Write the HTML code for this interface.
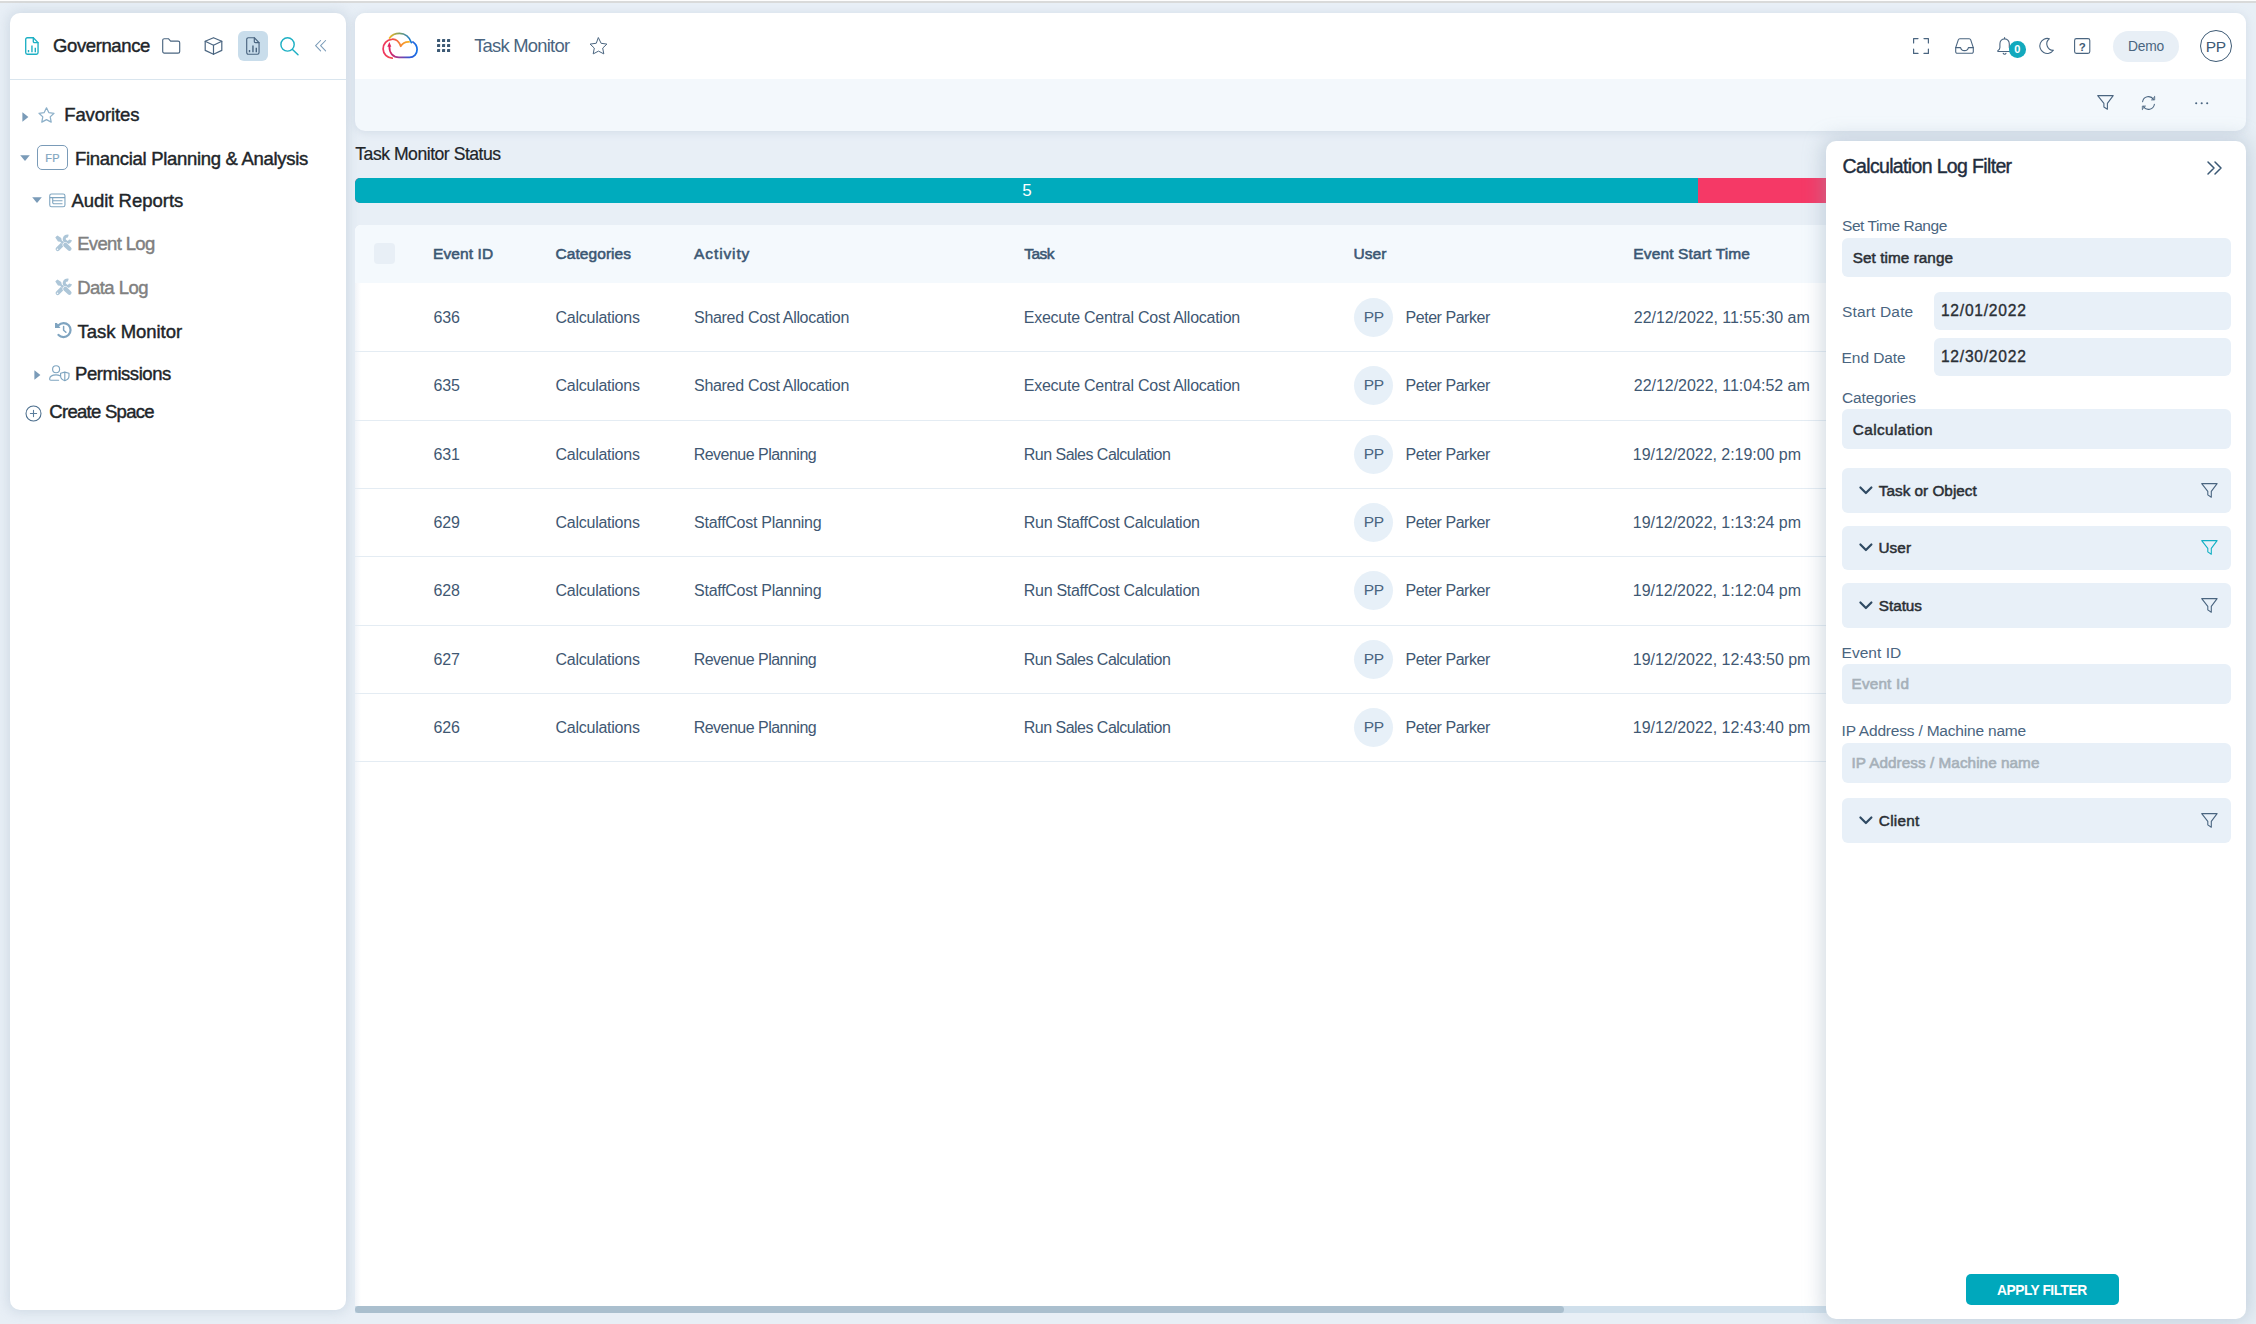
<!DOCTYPE html>
<html lang="en">
<head>
<meta charset="utf-8">
<title>Task Monitor</title>
<style>
*{box-sizing:border-box;margin:0;padding:0}
html,body{width:2256px;height:1324px;overflow:hidden}
body{background:#e8eff6;font-family:"Liberation Sans",sans-serif;color:#1f2933;position:relative}
.abs{position:absolute}
.t{position:absolute;white-space:nowrap;line-height:20px}
svg{position:absolute;overflow:visible;fill:none;stroke-linecap:round;stroke-linejoin:round}
#strip{left:0;top:0;width:2256px;height:3px;background:linear-gradient(#fdfdfd 0,#fdfdfd 1px,#d9dada 1px,#d9dada 100%)}
#side{left:10px;top:13px;width:336px;height:1297px;background:#fff;border-radius:10px;box-shadow:0 0 12px 2px rgba(150,170,190,.3)}
#sideline{left:10px;top:79px;width:336px;height:1px;background:#d9e5ee}
#head{left:355px;top:13px;width:1891px;height:118px;border-radius:10px;background:#f3f8fc;overflow:hidden;box-shadow:0 1px 8px rgba(150,170,190,.28)}
#headtop{left:0;top:0;width:100%;height:66px;background:#fff}
#table{left:355px;top:225px;width:1480px;height:1081px;background:#fff;border-radius:6px 0 0 0;overflow:hidden}
#thead{left:0;top:0;width:100%;height:58px;background:#f4f9fd}
.rl{position:absolute;left:355px;width:1480px;height:1px;background:#e4ecf3}
.av{position:absolute;left:1354px;width:39px;height:39px;border-radius:50%;background:#e7f0f8}
#filter{left:1826px;top:141px;width:420px;height:1178px;background:#fff;border-radius:10px;box-shadow:0 0 20px 3px rgba(140,160,180,.4)}
.inp{position:absolute;background:#e8f0f8;border-radius:6px}
</style>
</head>
<body>
<div id="strip" class="abs"></div>
<div id="side" class="abs"></div><div id="sideline" class="abs"></div>
<svg style="left:24.9px;top:37.0px" width="14" height="18" viewBox="0 0 14 18" stroke="#1eb0c4" stroke-width="1.35"><path d="M2.3 .75H8.3L13.05 5.6V15.6A1.6 1.6 0 0 1 11.45 17.2H2.3A1.6 1.6 0 0 1 .7 15.6V2.35A1.6 1.6 0 0 1 2.3 .75Z"/><path d="M8.3 .75V4.5A1.1 1.1 0 0 0 9.4 5.6H13.05"/><path d="M3.5 15.3V13M6.95 15.3V8.4M10.3 15.3V10.7" stroke-width="1.4" stroke-linecap="butt"/></svg>
<div class="t" style="left:53.00px;top:35.50px;font-size:18.5px;color:#212529;letter-spacing:-0.388px;-webkit-text-stroke:0.42px #212529;">Governance</div>
<svg style="left:162.4px;top:38.1px" width="18" height="16" viewBox="0 0 18 16" stroke="#4a6580" stroke-width="1.15"><path d="M.7 2.3A1.6 1.6 0 0 1 2.3 .7H6.4L8.6 3.1H16.1A1.6 1.6 0 0 1 17.7 4.7V13.5A1.6 1.6 0 0 1 16.1 15.1H2.3A1.6 1.6 0 0 1 .7 13.5Z"/></svg>
<svg style="left:204px;top:37.2px" width="19" height="18" viewBox="0 0 19 18" stroke="#4a6580" stroke-width="1.2"><path d="M9.5 .7L17.8 4.3V13.4L9.5 17.3L1.2 13.4V4.3Z"/><path d="M1.2 4.3L9.5 8.2L17.8 4.3M9.5 8.2V17.3"/></svg>
<div class="abs" style="left:238px;top:31px;width:30px;height:30px;border-radius:6px;background:#c9ddeb"></div>
<svg style="left:246.2px;top:37.0px" width="14" height="18" viewBox="0 0 14 18" stroke="#4a6580" stroke-width="1.15"><path d="M2.3 .75H8.3L13.05 5.6V15.6A1.6 1.6 0 0 1 11.45 17.2H2.3A1.6 1.6 0 0 1 .7 15.6V2.35A1.6 1.6 0 0 1 2.3 .75Z"/><path d="M8.3 .75V4.5A1.1 1.1 0 0 0 9.4 5.6H13.05"/><path d="M3.5 15.3V13M6.95 15.3V8.4M10.3 15.3V10.7" stroke-width="1.4" stroke-linecap="butt"/></svg>
<svg style="left:280px;top:36.9px" width="19" height="19" viewBox="0 0 19 19" stroke="#1eb0c4" stroke-width="1.45"><circle cx="7.55" cy="7.45" r="6.65"/><path d="M12.5 12.5L18 17.8"/></svg>
<svg style="left:315px;top:39.7px" width="11" height="12" viewBox="0 0 11 12" stroke="#7a9bb8" stroke-width="1.05"><path d="M5.6 .5L.6 5.7L5.6 10.9M10.6 .5L5.6 5.7L10.6 10.9"/></svg>
<svg style="left:22px;top:112px" width="7" height="10" viewBox="0 0 7 10" stroke="none"><path d="M.4 .3L6.4 5L.4 9.7Z" fill="#7a9bb8"/></svg>
<svg style="left:37.8px;top:107px" width="17" height="16" viewBox="0 0 17 16" stroke="#8db0c9" stroke-width="1.25"><path d="M8.5 .8L10.8 5.6L16 6.3L12.2 9.9L13.2 15.1L8.5 12.6L3.8 15.1L4.8 9.9L1 6.3L6.2 5.6Z"/></svg>
<div class="t" style="left:64.20px;top:104.50px;font-size:18.5px;color:#212529;letter-spacing:-0.103px;-webkit-text-stroke:0.42px #212529;">Favorites</div>
<svg style="left:20px;top:155px" width="10" height="6" viewBox="0 0 10 6" stroke="none"><path d="M.2 .2H9.8L5 5.9Z" fill="#7a9bb8"/></svg>
<div class="abs" style="left:37px;top:145px;width:31px;height:25px;border:1px solid #7a9bb8;border-radius:5px"></div>
<div class="t" style="left:-47.46px;width:200px;text-align:center;top:148.00px;font-size:11px;color:#7fa5c0;letter-spacing:0.281px;-webkit-text-stroke:0.2px #7fa5c0;">FP</div>
<div class="t" style="left:75.00px;top:148.50px;font-size:18.5px;color:#212529;letter-spacing:-0.301px;-webkit-text-stroke:0.42px #212529;">Financial Planning &amp; Analysis</div>
<svg style="left:32.4px;top:197.4px" width="10" height="6" viewBox="0 0 10 6" stroke="none"><path d="M.2 .2H9.8L5 5.9Z" fill="#7a9bb8"/></svg>
<svg style="left:49px;top:192.6px" width="17" height="15" viewBox="0 0 17 15" stroke="#7fa5c0" stroke-width="1.1"><rect x=".75" y=".95" width="15.2" height="12.8" rx="1.8"/><path d="M.8 4.6H16M3.7 4.8V9.4A1.4 1.4 0 0 0 5.1 10.8H13.5M3.7 7.8H13.5" stroke-linecap="butt"/></svg>
<div class="t" style="left:71.40px;top:191.10px;font-size:18.5px;color:#212529;letter-spacing:-0.019px;-webkit-text-stroke:0.42px #212529;">Audit Reports</div>
<svg style="left:54.8px;top:234.8px" width="17" height="17" viewBox="0 0 17 17" stroke="#adc6d8"><path d="M13.3 1.1A3.2 3.2 0 1 0 15.5 4.9" stroke-width="3" stroke-linecap="butt"/><path d="M10.2 6.6L2.7 14" stroke-width="4.2"/><path d="M1.2 1.6L2.5 .5L6.2 3L6.7 5.2L8.9 7.4L7.4 8.9L5.2 6.7L3 6.4L.3 2.4Z" fill="#adc6d8" stroke="#fff" stroke-width=".7" paint-order="stroke"/><path d="M10.3 9.9L14.4 13.8" stroke="#fff" stroke-width="5.4"/><path d="M10.3 9.9L14.4 13.8" stroke-width="4.3"/><circle cx="2.5" cy="14.2" r=".75" fill="#fff" stroke="none"/></svg>
<div class="t" style="left:77.20px;top:234.30px;font-size:18.5px;color:#808080;letter-spacing:-0.653px;-webkit-text-stroke:0.42px #808080;">Event Log</div>
<svg style="left:54.8px;top:279.0px" width="17" height="17" viewBox="0 0 17 17" stroke="#adc6d8"><path d="M13.3 1.1A3.2 3.2 0 1 0 15.5 4.9" stroke-width="3" stroke-linecap="butt"/><path d="M10.2 6.6L2.7 14" stroke-width="4.2"/><path d="M1.2 1.6L2.5 .5L6.2 3L6.7 5.2L8.9 7.4L7.4 8.9L5.2 6.7L3 6.4L.3 2.4Z" fill="#adc6d8" stroke="#fff" stroke-width=".7" paint-order="stroke"/><path d="M10.3 9.9L14.4 13.8" stroke="#fff" stroke-width="5.4"/><path d="M10.3 9.9L14.4 13.8" stroke-width="4.3"/><circle cx="2.5" cy="14.2" r=".75" fill="#fff" stroke="none"/></svg>
<div class="t" style="left:77.20px;top:277.80px;font-size:18.5px;color:#808080;letter-spacing:-0.542px;-webkit-text-stroke:0.42px #808080;">Data Log</div>
<svg style="left:54.8px;top:321.8px" width="17" height="16" viewBox="0 0 17 16" stroke="#7fa4c0"><path d="M3.5 3.2A7 7 0 1 1 3.5 12.9" stroke-width="2.2" stroke-linecap="round"/><path d="M0 .9L1.9 .9L5.4 5.9H0Z" fill="#7fa4c0" stroke="none"/><path d="M8.6 4.4V8.2L10.9 10.3" stroke-width="1.5"/></svg>
<div class="t" style="left:77.60px;top:321.60px;font-size:18.5px;color:#212529;letter-spacing:-0.028px;-webkit-text-stroke:0.42px #212529;">Task Monitor</div>
<svg style="left:34px;top:370.4px" width="7" height="10" viewBox="0 0 7 10" stroke="none"><path d="M.4 .3L6.4 5L.4 9.7Z" fill="#7a9bb8"/></svg>
<svg style="left:49.2px;top:365.2px" width="21" height="16" viewBox="0 0 21 16" stroke="#7fa5c0" stroke-width="1.15"><circle cx="7.1" cy="4.2" r="3.5"/><path d="M9.6 15.2H1.8A1.2 1.2 0 0 1 .6 14C.8 11.6 3.4 9.9 7 9.9C8.6 9.9 10 10.2 11 10.8"/><path d="M15.8 7.1L20 8.3V11C20 13.4 18 15 15.8 15.6C13.6 15 11.6 13.4 11.6 11V8.3Z"/><path d="M15.8 7.3V15.4"/></svg>
<div class="t" style="left:75.00px;top:364.40px;font-size:18.5px;color:#212529;letter-spacing:-0.450px;-webkit-text-stroke:0.42px #212529;">Permissions</div>
<svg style="left:24.8px;top:404.5px" width="17" height="17" viewBox="0 0 17 17" stroke="#4a6d8c" stroke-width="1.05"><circle cx="8.5" cy="8.5" r="7.5"/><path d="M8.5 5.4V11.6M5.4 8.5H11.6" stroke="#5a7d9c" stroke-width="1.1"/></svg>
<div class="t" style="left:49.30px;top:401.90px;font-size:18.5px;color:#212529;letter-spacing:-0.712px;-webkit-text-stroke:0.42px #212529;">Create Space</div>
<div id="head" class="abs"><div id="headtop" class="abs"></div></div>
<svg style="left:381px;top:32px" width="38" height="28" viewBox="0 0 38 28" stroke-width="1.75"><defs><linearGradient id="lg1" gradientUnits="userSpaceOnUse" x1="8" y1="0" x2="36" y2="0"><stop offset="0" stop-color="#e0245e"/><stop offset=".4" stop-color="#8a3fa0"/><stop offset=".7" stop-color="#3a55d0"/><stop offset="1" stop-color="#1570e6"/></linearGradient><linearGradient id="lg2" gradientUnits="userSpaceOnUse" x1="8" y1="0" x2="30" y2="0"><stop offset="0" stop-color="#f7b521"/><stop offset=".45" stop-color="#84a35e"/><stop offset="1" stop-color="#1478d4"/></linearGradient><linearGradient id="lg3" gradientUnits="userSpaceOnUse" x1="2" y1="0" x2="28" y2="0"><stop offset="0" stop-color="#ef3560"/><stop offset=".4" stop-color="#f2504a"/><stop offset=".7" stop-color="#f58a30"/><stop offset="1" stop-color="#f7b020"/></linearGradient></defs><path d="M8.6 6.1C10.6 3.2 14.5 1.4 18.5 1.4C24 1.4 28.6 5 30.3 10.6" stroke="url(#lg2)"/><path d="M11.2 26.2A9.47 9.47 0 0 1 10.8 7.3C14.5 6.9 18 9.6 19.7 14.3C21.5 11.3 24.5 9.7 28.1 9.9" stroke="url(#lg3)"/><path d="M8.4 14.4C8.2 21 12 25.4 18 25.4H28.5C33 25.4 36.1 21.8 36.1 17.6C36.1 14.2 34.4 11.5 31.9 9.9" stroke="url(#lg1)"/><path d="M8.4 10L6.3 14.8H10.3Z" fill="#e0245e" stroke="none"/></svg>
<svg style="left:436.9px;top:39.3px" width="14" height="14" viewBox="0 0 14 14" stroke="none"><g fill="#3d5a75"><rect x="0" y="0" width="3.1" height="3.1" rx=".4"/><rect x="5" y="0" width="3.1" height="3.1" rx=".4"/><rect x="10" y="0" width="3.1" height="3.1" rx=".4"/><rect x="0" y="5" width="3.1" height="3.1" rx=".4"/><rect x="5" y="5" width="3.1" height="3.1" rx=".4"/><rect x="10" y="5" width="3.1" height="3.1" rx=".4"/><rect x="0" y="10" width="3.1" height="3.1" rx=".4"/><rect x="5" y="10" width="3.1" height="3.1" rx=".4"/><rect x="10" y="10" width="3.1" height="3.1" rx=".4"/></g></svg>
<div class="t" style="left:474.20px;top:35.70px;font-size:18.4px;color:#4a6580;letter-spacing:-0.766px;">Task Monitor</div>
<svg style="left:589.4px;top:37.2px" width="19" height="18" viewBox="0 0 19 18" stroke="#4a6580" stroke-width="1"><path d="M9.5 .9L12.1 6.3L17.9 7.1L13.7 11.1L14.8 16.9L9.5 14.1L4.2 16.9L5.3 11.1L1.1 7.1L6.9 6.3Z"/></svg>
<svg style="left:1913px;top:38px" width="16" height="16" viewBox="0 0 16 16" stroke="#4a6580" stroke-width="1.2" stroke-linecap="butt" stroke-linejoin="miter"><path d="M.6 5V.6H5M11 .6H15.4V5M15.4 11V15.4H11M5 15.4H.6V11"/></svg>
<svg style="left:1955px;top:38px" width="19" height="16" viewBox="0 0 19 16" stroke="#4a6580" stroke-width="1.1"><path d="M.7 9.6L3.3 1.8A1.6 1.6 0 0 1 4.8 .7H14.2A1.6 1.6 0 0 1 15.7 1.8L18.3 9.6V13.8A1.5 1.5 0 0 1 16.8 15.3H2.2A1.5 1.5 0 0 1 .7 13.8Z"/><path d="M.7 9.6H5.6C5.9 11.4 7.4 12.6 9.5 12.6C11.6 12.6 13.1 11.4 13.4 9.6H18.3"/></svg>
<svg style="left:1996.7px;top:37px" width="16" height="18" viewBox="0 0 16 18" stroke="#4a6580" stroke-width="1.1"><path d="M7.6 .6V1.9M7.6 1.9C4.6 1.9 2.9 4.3 2.9 7V10.4C2.9 11.8 2.2 12.6 .9 13.6C.5 13.9 .6 14.5 1.1 14.5H14.1C14.6 14.5 14.7 13.9 14.3 13.6C13 12.6 12.3 11.8 12.3 10.4V7C12.3 4.3 10.6 1.9 7.6 1.9Z"/><path d="M6.2 16.3C6.5 17 7 17.3 7.6 17.3C8.2 17.3 8.7 17 9 16.3"/></svg>
<div class="abs" style="left:2009px;top:41.2px;width:16.6px;height:16.6px;border-radius:50%;background:#12a9bd"></div>
<div class="t" style="left:1917.30px;width:200px;text-align:center;top:39.40px;font-size:11px;color:#fff;font-weight:700;">0</div>
<svg style="left:2040.3px;top:37.9px" width="14" height="16" viewBox="0 0 14 16" stroke="#4a6580" stroke-width="1.1"><path d="M9.3 .7A7.5 7.5 0 1 0 13.4 12.3A6.5 6.5 0 0 1 9.3 .7Z"/></svg>
<svg style="left:2074px;top:38px" width="17" height="16" viewBox="0 0 17 16" stroke="#4a6580" stroke-width="1.1"><rect x=".6" y=".6" width="15.2" height="14.8" rx="1.8"/></svg>
<div class="t" style="left:1982.30px;width:200px;text-align:center;top:36.50px;font-size:11.5px;color:#3d5a75;font-weight:700;">?</div>
<div class="abs" style="left:2113px;top:31px;width:66px;height:30.6px;border-radius:16px;background:#e8eff6"></div>
<div class="t" style="left:2127.90px;top:36.60px;font-size:13.8px;color:#4a6580;letter-spacing:-0.177px;">Demo</div>
<div class="abs" style="left:2200px;top:30px;width:32px;height:32px;border-radius:50%;border:1.4px solid #3d5a75"></div>
<div class="t" style="left:2205.80px;top:36.50px;font-size:15.5px;color:#3d5a75;letter-spacing:-0.338px;">PP</div>
<svg style="left:2096.5px;top:94.8px" width="17" height="15" viewBox="0 0 17 15" stroke="#4a6580" stroke-width="1.1"><path d="M.7 .65H16.2L10.4 8.4V14.3L6.9 12V8.4Z"/></svg>
<svg style="left:2140.9px;top:96px" width="15" height="14" viewBox="0 0 16 15" stroke="#4a6580" stroke-width="1.15"><path d="M1.7 6.2A6.4 6.4 0 0 1 13.4 3.6M14.3 8.8A6.4 6.4 0 0 1 2.6 11.4"/><path d="M14.6 .8V4.2H11.2L14.6 .8ZM1.4 14.2V10.8H4.8L1.4 14.2Z" stroke-width=".9"/></svg>
<svg style="left:2194.8px;top:101.9px" width="14" height="3" viewBox="0 0 14 3" stroke="none"><g fill="#4a6580"><circle cx="1.2" cy="1.2" r="1.05"/><circle cx="6.7" cy="1.2" r="1.05"/><circle cx="12.2" cy="1.2" r="1.05"/></g></svg>
<div class="t" style="left:355.30px;top:143.90px;font-size:17.6px;color:#212529;letter-spacing:-0.483px;-webkit-text-stroke:0.2px #212529;">Task Monitor Status</div>
<div class="abs" style="left:355px;top:178px;width:1480px;height:25px;border-radius:5px 0 0 5px;overflow:hidden;background:#f53966"><div class="abs" style="left:0;top:0;width:1343px;height:25px;background:#00abbd"></div></div>
<div class="t" style="left:927.00px;width:200px;text-align:center;top:181.30px;font-size:17px;color:#fff;">5</div>
<div id="table" class="abs"><div id="thead" class="abs"></div><div class="abs" style="left:0;top:58px;width:6px;height:1023px;background:linear-gradient(90deg,#f1f4f8,#fff)"></div></div>
<div class="abs" style="left:374px;top:243px;width:21px;height:21px;border-radius:4px;background:#e8eff6"></div>
<div class="t" style="left:433.00px;top:243.50px;font-size:15.5px;color:#3b5773;letter-spacing:0.107px;-webkit-text-stroke:0.55px #3b5773;">Event ID</div>
<div class="t" style="left:555.50px;top:243.50px;font-size:15.5px;color:#3b5773;letter-spacing:0.066px;-webkit-text-stroke:0.55px #3b5773;">Categories</div>
<div class="t" style="left:694.10px;top:243.50px;font-size:15.5px;color:#3b5773;letter-spacing:0.880px;-webkit-text-stroke:0.55px #3b5773;">Activity</div>
<div class="t" style="left:1024.20px;top:243.50px;font-size:15.5px;color:#3b5773;letter-spacing:-0.507px;-webkit-text-stroke:0.55px #3b5773;">Task</div>
<div class="t" style="left:1353.50px;top:243.50px;font-size:15.5px;color:#3b5773;letter-spacing:0.079px;-webkit-text-stroke:0.55px #3b5773;">User</div>
<div class="t" style="left:1633.30px;top:243.50px;font-size:15.5px;color:#3b5773;letter-spacing:0.138px;-webkit-text-stroke:0.55px #3b5773;">Event Start Time</div>
<div class="t" style="left:433.40px;top:307.50px;font-size:16px;color:#3f5873;letter-spacing:-0.148px;">636</div>
<div class="t" style="left:555.50px;top:307.50px;font-size:16px;color:#3f5873;letter-spacing:-0.251px;">Calculations</div>
<div class="t" style="left:694.10px;top:307.50px;font-size:16px;color:#3f5873;letter-spacing:-0.317px;">Shared Cost Allocation</div>
<div class="t" style="left:1023.80px;top:307.50px;font-size:16px;color:#3f5873;letter-spacing:-0.257px;">Execute Central Cost Allocation</div>
<div class="av" style="top:298px"></div>
<div class="t" style="left:1363.80px;top:306.50px;font-size:15.5px;color:#4a6580;letter-spacing:-0.338px;">PP</div>
<div class="t" style="left:1405.60px;top:307.50px;font-size:16px;color:#3f5873;letter-spacing:-0.471px;">Peter Parker</div>
<div class="t" style="left:1633.80px;top:307.50px;font-size:16px;color:#3f5873;letter-spacing:-0.037px;">22/12/2022, 11:55:30 am</div>
<div class="rl" style="top:351px"></div>
<div class="t" style="left:433.40px;top:375.50px;font-size:16px;color:#3f5873;letter-spacing:-0.148px;">635</div>
<div class="t" style="left:555.50px;top:375.50px;font-size:16px;color:#3f5873;letter-spacing:-0.251px;">Calculations</div>
<div class="t" style="left:694.10px;top:375.50px;font-size:16px;color:#3f5873;letter-spacing:-0.317px;">Shared Cost Allocation</div>
<div class="t" style="left:1023.80px;top:375.50px;font-size:16px;color:#3f5873;letter-spacing:-0.257px;">Execute Central Cost Allocation</div>
<div class="av" style="top:366px"></div>
<div class="t" style="left:1363.80px;top:374.50px;font-size:15.5px;color:#4a6580;letter-spacing:-0.338px;">PP</div>
<div class="t" style="left:1405.60px;top:375.50px;font-size:16px;color:#3f5873;letter-spacing:-0.471px;">Peter Parker</div>
<div class="t" style="left:1633.80px;top:375.50px;font-size:16px;color:#3f5873;letter-spacing:-0.037px;">22/12/2022, 11:04:52 am</div>
<div class="rl" style="top:420px"></div>
<div class="t" style="left:433.40px;top:444.50px;font-size:16px;color:#3f5873;letter-spacing:-0.148px;">631</div>
<div class="t" style="left:555.50px;top:444.50px;font-size:16px;color:#3f5873;letter-spacing:-0.251px;">Calculations</div>
<div class="t" style="left:693.70px;top:444.50px;font-size:16px;color:#3f5873;letter-spacing:-0.518px;">Revenue Planning</div>
<div class="t" style="left:1023.80px;top:444.50px;font-size:16px;color:#3f5873;letter-spacing:-0.521px;">Run Sales Calculation</div>
<div class="av" style="top:435px"></div>
<div class="t" style="left:1363.80px;top:443.50px;font-size:15.5px;color:#4a6580;letter-spacing:-0.338px;">PP</div>
<div class="t" style="left:1405.60px;top:444.50px;font-size:16px;color:#3f5873;letter-spacing:-0.471px;">Peter Parker</div>
<div class="t" style="left:1632.80px;top:444.50px;font-size:16px;color:#3f5873;letter-spacing:-0.038px;">19/12/2022, 2:19:00 pm</div>
<div class="rl" style="top:488px"></div>
<div class="t" style="left:433.40px;top:512.50px;font-size:16px;color:#3f5873;letter-spacing:-0.148px;">629</div>
<div class="t" style="left:555.50px;top:512.50px;font-size:16px;color:#3f5873;letter-spacing:-0.251px;">Calculations</div>
<div class="t" style="left:694.10px;top:512.50px;font-size:16px;color:#3f5873;letter-spacing:-0.279px;">StaffCost Planning</div>
<div class="t" style="left:1023.80px;top:512.50px;font-size:16px;color:#3f5873;letter-spacing:-0.284px;">Run StaffCost Calculation</div>
<div class="av" style="top:503px"></div>
<div class="t" style="left:1363.80px;top:511.50px;font-size:15.5px;color:#4a6580;letter-spacing:-0.338px;">PP</div>
<div class="t" style="left:1405.60px;top:512.50px;font-size:16px;color:#3f5873;letter-spacing:-0.471px;">Peter Parker</div>
<div class="t" style="left:1632.80px;top:512.50px;font-size:16px;color:#3f5873;letter-spacing:-0.038px;">19/12/2022, 1:13:24 pm</div>
<div class="rl" style="top:556px"></div>
<div class="t" style="left:433.40px;top:580.50px;font-size:16px;color:#3f5873;letter-spacing:-0.148px;">628</div>
<div class="t" style="left:555.50px;top:580.50px;font-size:16px;color:#3f5873;letter-spacing:-0.251px;">Calculations</div>
<div class="t" style="left:694.10px;top:580.50px;font-size:16px;color:#3f5873;letter-spacing:-0.279px;">StaffCost Planning</div>
<div class="t" style="left:1023.80px;top:580.50px;font-size:16px;color:#3f5873;letter-spacing:-0.284px;">Run StaffCost Calculation</div>
<div class="av" style="top:571px"></div>
<div class="t" style="left:1363.80px;top:579.50px;font-size:15.5px;color:#4a6580;letter-spacing:-0.338px;">PP</div>
<div class="t" style="left:1405.60px;top:580.50px;font-size:16px;color:#3f5873;letter-spacing:-0.471px;">Peter Parker</div>
<div class="t" style="left:1632.80px;top:580.50px;font-size:16px;color:#3f5873;letter-spacing:-0.038px;">19/12/2022, 1:12:04 pm</div>
<div class="rl" style="top:625px"></div>
<div class="t" style="left:433.40px;top:649.50px;font-size:16px;color:#3f5873;letter-spacing:-0.148px;">627</div>
<div class="t" style="left:555.50px;top:649.50px;font-size:16px;color:#3f5873;letter-spacing:-0.251px;">Calculations</div>
<div class="t" style="left:693.70px;top:649.50px;font-size:16px;color:#3f5873;letter-spacing:-0.518px;">Revenue Planning</div>
<div class="t" style="left:1023.80px;top:649.50px;font-size:16px;color:#3f5873;letter-spacing:-0.521px;">Run Sales Calculation</div>
<div class="av" style="top:640px"></div>
<div class="t" style="left:1363.80px;top:648.50px;font-size:15.5px;color:#4a6580;letter-spacing:-0.338px;">PP</div>
<div class="t" style="left:1405.60px;top:649.50px;font-size:16px;color:#3f5873;letter-spacing:-0.471px;">Peter Parker</div>
<div class="t" style="left:1632.80px;top:649.50px;font-size:16px;color:#3f5873;letter-spacing:-0.013px;">19/12/2022, 12:43:50 pm</div>
<div class="rl" style="top:693px"></div>
<div class="t" style="left:433.40px;top:717.50px;font-size:16px;color:#3f5873;letter-spacing:-0.148px;">626</div>
<div class="t" style="left:555.50px;top:717.50px;font-size:16px;color:#3f5873;letter-spacing:-0.251px;">Calculations</div>
<div class="t" style="left:693.70px;top:717.50px;font-size:16px;color:#3f5873;letter-spacing:-0.518px;">Revenue Planning</div>
<div class="t" style="left:1023.80px;top:717.50px;font-size:16px;color:#3f5873;letter-spacing:-0.521px;">Run Sales Calculation</div>
<div class="av" style="top:708px"></div>
<div class="t" style="left:1363.80px;top:716.50px;font-size:15.5px;color:#4a6580;letter-spacing:-0.338px;">PP</div>
<div class="t" style="left:1405.60px;top:717.50px;font-size:16px;color:#3f5873;letter-spacing:-0.471px;">Peter Parker</div>
<div class="t" style="left:1632.80px;top:717.50px;font-size:16px;color:#3f5873;letter-spacing:-0.013px;">19/12/2022, 12:43:40 pm</div>
<div class="rl" style="top:761px"></div>
<div class="abs" style="left:355px;top:1306px;width:1480px;height:7px;background:#cfdfeb"></div><div class="abs" style="left:355px;top:1306px;width:1209px;height:7px;background:#aabfce;border-radius:4px"></div>
<div id="filter" class="abs"></div>
<div class="t" style="left:1842.60px;top:156.00px;font-size:19.5px;color:#1f2d3d;letter-spacing:-0.651px;-webkit-text-stroke:0.4px #1f2d3d;">Calculation Log Filter</div>
<svg style="left:2207.4px;top:161.3px" width="15" height="14" viewBox="0 0 15 14" stroke="#3a5875" stroke-width="1.5"><path d="M1 1L7 7L1 13M8 1L14 7L8 13"/></svg>
<div class="t" style="left:1842.00px;top:215.50px;font-size:15.5px;color:#4a6580;letter-spacing:-0.446px;">Set Time Range</div>
<div class="inp" style="left:1842px;top:238px;width:389px;height:38.5px"></div>
<div class="t" style="left:1852.80px;top:247.50px;font-size:15.3px;color:#2a2f35;letter-spacing:0.056px;-webkit-text-stroke:0.5px #2a2f35;">Set time range</div>
<div class="t" style="left:1842.00px;top:301.50px;font-size:15.5px;color:#4a6580;letter-spacing:0.160px;">Start Date</div>
<div class="inp" style="left:1934px;top:292px;width:297px;height:38px"></div>
<div class="t" style="left:1940.90px;top:300.50px;font-size:15.6px;color:#2a2f35;letter-spacing:0.770px;-webkit-text-stroke:0.35px #2a2f35;">12/01/2022</div>
<div class="t" style="left:1841.60px;top:347.50px;font-size:15.5px;color:#4a6580;letter-spacing:-0.087px;">End Date</div>
<div class="inp" style="left:1934px;top:338px;width:297px;height:38px"></div>
<div class="t" style="left:1940.90px;top:346.50px;font-size:15.6px;color:#2a2f35;letter-spacing:0.770px;-webkit-text-stroke:0.35px #2a2f35;">12/30/2022</div>
<div class="t" style="left:1842.00px;top:387.50px;font-size:15.5px;color:#4a6580;letter-spacing:-0.112px;">Categories</div>
<div class="inp" style="left:1842px;top:409px;width:389px;height:40px"></div>
<div class="t" style="left:1852.80px;top:419.50px;font-size:15.3px;color:#2a2f35;letter-spacing:0.413px;-webkit-text-stroke:0.5px #2a2f35;">Calculation</div>
<div class="inp" style="left:1842px;top:468px;width:389px;height:45px"></div>
<svg style="left:1859.1px;top:485.5px" width="14" height="9" viewBox="0 0 14 9" stroke="#2f4a63" stroke-width="2.2"><path d="M1.4 1.5L6.9 7L12.4 1.5"/></svg>
<div class="t" style="left:1878.80px;top:480.50px;font-size:15.3px;color:#2a2f35;letter-spacing:0.014px;-webkit-text-stroke:0.5px #2a2f35;">Task or Object</div>
<svg style="left:2200.6px;top:482.6px" width="17" height="15" viewBox="0 0 17 15" stroke="#4a6580" stroke-width="1.1"><path d="M.7 .65H16.1L10.3 8.3V14.2L6.8 11.9V8.3Z"/></svg>
<div class="inp" style="left:1842px;top:526px;width:389px;height:44px"></div>
<svg style="left:1859.1px;top:542.5px" width="14" height="9" viewBox="0 0 14 9" stroke="#2f4a63" stroke-width="2.2"><path d="M1.4 1.5L6.9 7L12.4 1.5"/></svg>
<div class="t" style="left:1878.40px;top:537.50px;font-size:15.3px;color:#2a2f35;letter-spacing:0.099px;-webkit-text-stroke:0.5px #2a2f35;">User</div>
<svg style="left:2200.6px;top:539.6px" width="17" height="15" viewBox="0 0 17 15" stroke="#12b0c4" stroke-width="1.1"><path d="M.7 .65H16.1L10.3 8.3V14.2L6.8 11.9V8.3Z"/></svg>
<div class="inp" style="left:1842px;top:583px;width:389px;height:45px"></div>
<svg style="left:1859.1px;top:600.5px" width="14" height="9" viewBox="0 0 14 9" stroke="#2f4a63" stroke-width="2.2"><path d="M1.4 1.5L6.9 7L12.4 1.5"/></svg>
<div class="t" style="left:1878.80px;top:595.50px;font-size:15.3px;color:#2a2f35;letter-spacing:-0.044px;-webkit-text-stroke:0.5px #2a2f35;">Status</div>
<svg style="left:2200.6px;top:597.6px" width="17" height="15" viewBox="0 0 17 15" stroke="#4a6580" stroke-width="1.1"><path d="M.7 .65H16.1L10.3 8.3V14.2L6.8 11.9V8.3Z"/></svg>
<div class="inp" style="left:1842px;top:798px;width:389px;height:45px"></div>
<svg style="left:1859.1px;top:815.5px" width="14" height="9" viewBox="0 0 14 9" stroke="#2f4a63" stroke-width="2.2"><path d="M1.4 1.5L6.9 7L12.4 1.5"/></svg>
<div class="t" style="left:1878.80px;top:810.50px;font-size:15.3px;color:#2a2f35;letter-spacing:0.288px;-webkit-text-stroke:0.5px #2a2f35;">Client</div>
<svg style="left:2200.6px;top:812.6px" width="17" height="15" viewBox="0 0 17 15" stroke="#4a6580" stroke-width="1.1"><path d="M.7 .65H16.1L10.3 8.3V14.2L6.8 11.9V8.3Z"/></svg>
<div class="t" style="left:1841.60px;top:642.50px;font-size:15.5px;color:#4a6580;letter-spacing:0.022px;">Event ID</div>
<div class="inp" style="left:1842px;top:664px;width:389px;height:40px"></div>
<div class="t" style="left:1851.50px;top:674.00px;font-size:15.3px;color:#a6b0b9;letter-spacing:0.183px;-webkit-text-stroke:0.6px #a6b0b9;">Event Id</div>
<div class="t" style="left:1841.60px;top:721.00px;font-size:15.5px;color:#4a6580;letter-spacing:-0.195px;">IP Address / Machine name</div>
<div class="inp" style="left:1842px;top:743px;width:389px;height:40px"></div>
<div class="t" style="left:1851.50px;top:752.50px;font-size:15.3px;color:#a6b0b9;letter-spacing:0.046px;-webkit-text-stroke:0.6px #a6b0b9;">IP Address / Machine name</div>
<div class="abs" style="left:1966px;top:1274px;width:153px;height:31px;border-radius:5px;background:#00a8bc"></div>
<div class="t" style="left:1997.00px;top:1280.50px;font-size:13.8px;color:#fff;font-weight:700;letter-spacing:-0.487px;">APPLY FILTER</div>
</body>
</html>
